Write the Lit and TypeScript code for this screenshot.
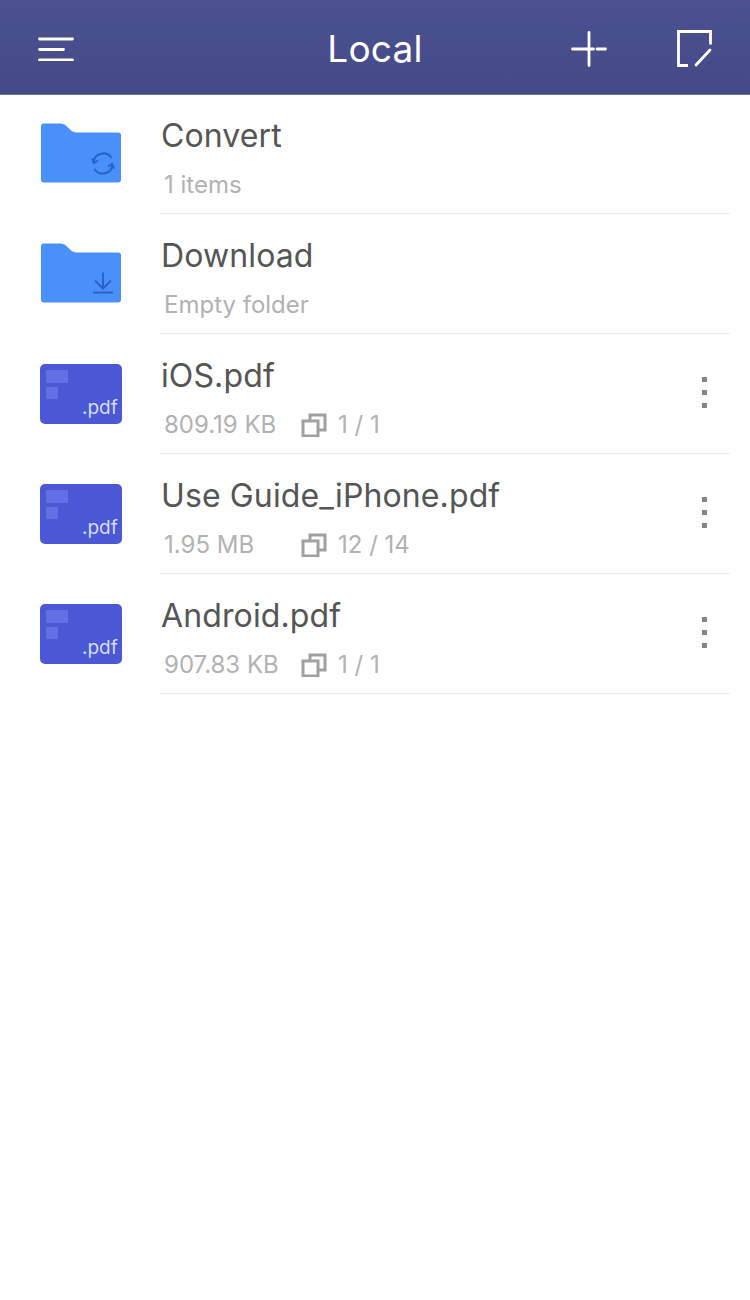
import { LitElement, html, css, svg } from "lit";
import { customElement } from "lit/decorators.js";

type Item = {
  name: string;
  kind: "convert" | "download" | "pdf";
  size: string;
  pages?: string;
};

const items: Item[] = [
  { name: "Convert", kind: "convert", size: "1 items" },
  { name: "Download", kind: "download", size: "Empty folder" },
  { name: "iOS.pdf", kind: "pdf", size: "809.19 KB", pages: "1 / 1" },
  { name: "Use Guide_iPhone.pdf", kind: "pdf", size: "1.95 MB", pages: "12 / 14" },
  { name: "Android.pdf", kind: "pdf", size: "907.83 KB", pages: "1 / 1" },
];

const badges = {
  convert: svg`
    <path d="M53.500 39a9.800 9.800 0 0 1 18-4" />
    <path d="M52 35.500l2 4.500 4-2.500" />
    <path d="M72.500 42a9.800 9.800 0 0 1-18 4" />
    <path d="M74 45.500l-2-4.500-4 2.500" />`,
  download: svg`
    <path d="M63 29.500v16" />
    <path d="M55 37.500l8 8 8-8" />
    <path d="M53 49.500h20" />`,
};

@customElement("app-root")
export class AppRoot extends LitElement {
  static styles = css`
    :host {
      display: block;
      width: 750px;
      height: 1300px;
      background: #ffffff;
      font-family: "Inter", "Liberation Sans", sans-serif;
    }
    .header {
      height: 95px;
      margin-bottom: -1px;
      box-sizing: border-box;
      display: grid;
      grid-template-columns: 1fr auto 1fr;
      align-items: center;
      padding: 3px 38px 0;
      background: linear-gradient(#4c5291, #434a86);
      border-bottom: 1px solid #6b70a0;
      color: #ffffff;
    }
    .header svg {
      display: block;
      fill: none;
      stroke: #ffffff;
      stroke-width: 2.800;
      stroke-linecap: round;
    }
    .title {
      font-size: 37px;
      font-weight: 400;
      letter-spacing: 0.2px;
    }
    .actions {
      display: flex;
      align-items: center;
      justify-content: flex-end;
      gap: 70px;
    }
    .row {
      height: 120px;
      display: flex;
    }
    .thumb {
      width: 160px;
      flex: none;
      padding: 29px 0 0 40px;
      box-sizing: border-box;
    }
    .thumb.pdf {
      padding-top: 30px;
    }
    .thumb svg {
      display: block;
    }
    .body {
      flex: 1;
      margin-right: 20px;
      border-bottom: 1px solid #ebebeb;
      display: flex;
      align-items: flex-start;
      justify-content: space-between;
    }
    .name {
      font-size: 32px;
      line-height: 38px;
      margin: 23px 0 0 1px;
      color: #555555;
      letter-spacing: 0.12px;
    }
    .meta {
      display: flex;
      align-items: center;
      margin: 16px 0 0 4px;
      font-size: 24px;
      line-height: 28px;
      color: #b2b2b2;
    }
    .size {
      width: 137px;
    }
    .meta svg {
      margin-right: 11px;
      fill: none;
      stroke: #a0a0a0;
      stroke-width: 3;
    }
    .more {
      display: flex;
      flex-direction: column;
      gap: 8px;
      margin: 43px 23px 0 0;
    }
    .more span {
      width: 5px;
      height: 5px;
      background: #858585;
    }
  `;

  private thumb(kind: Item["kind"]) {
    if (kind === "pdf") {
      return html`<svg width="82" height="60" viewBox="0 0 82 60">
        <rect width="82" height="60" rx="5" fill="#4a58d6" />
        <rect x="6" y="6" width="22" height="13" fill="#6270e6" />
        <rect x="6" y="23" width="12" height="12" fill="#6270e6" />
        <text x="42" y="50" font-size="19" fill="#d5dbfa">.pdf</text>
      </svg>`;
    }
    return html`<svg width="82" height="60" viewBox="0 0 82 60">
      <path
        d="M4 0.500h16c3 0 5 1 7 3l3 3c2 2 4 3 7 3h41c2 0 3 1 3 3v44c0 2-1 3-3 3H4c-2 0-3-1-3-3V3.500c0-2 1-3 3-3z"
        fill="#4a90fa"
      />
      <g fill="none" stroke="#2a62c6" stroke-width="2">
        ${badges[kind]}
      </g>
    </svg>`;
  }

  private row(item: Item) {
    return html`<div class="row">
      <div class="thumb ${item.kind === "pdf" ? "pdf" : ""}">${this.thumb(item.kind)}</div>
      <div class="body">
        <div>
          <div class="name">${item.name}</div>
          <div class="meta">
            ${item.pages
              ? html`<span class="size">${item.size}</span>
                  <svg width="26" height="24" viewBox="0 0 26 24">
                    <rect x="2" y="8" width="15" height="15" />
                    <path d="M9 8V2h15v15h-7" />
                  </svg>
                  <span>${item.pages}</span>`
              : html`<span>${item.size}</span>`}
          </div>
        </div>
        ${item.kind === "pdf"
          ? html`<div class="more"><span></span><span></span><span></span></div>`
          : null}
      </div>
    </div>`;
  }

  render() {
    return html`
      <div class="header">
        <svg width="36" height="24" viewBox="0 0 36 24">
          <path d="M1.500 2h33M1.500 12.500h24M1.500 23h33" />
        </svg>
        <div class="title">Local</div>
        <div class="actions">
          <svg width="36" height="36" viewBox="0 0 36 36">
            <path d="M1.500 18h21M26 18h8.500M18 1.500v33" />
          </svg>
          <svg width="35" height="37" viewBox="0 0 35 37">
            <path d="M11 35.500H1.500v-34h32v13" stroke-linecap="butt" />
            <path d="M19 35l14-15" />
          </svg>
        </div>
      </div>
      ${items.map((i) => this.row(i))}
    `;
  }
}
